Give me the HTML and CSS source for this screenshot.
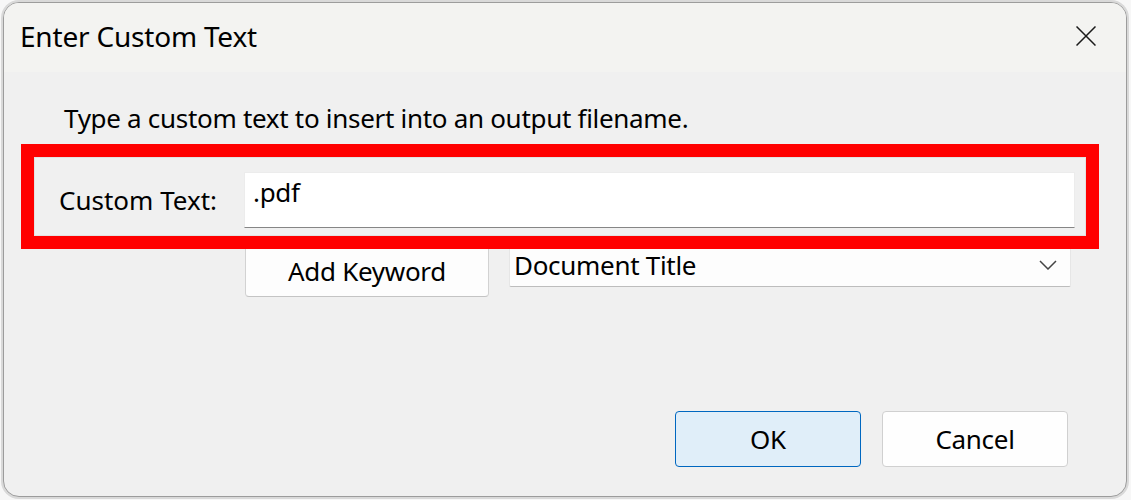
FILE: index.html
```html
<!DOCTYPE html>
<html>
<head>
<meta charset="utf-8">
<link rel="stylesheet" href="styles.css">
</head>
<body>
<div class="dialog">
  <div class="titlebar">
    <span class="title">Enter Custom Text</span>
    <svg class="close" width="20" height="20" viewBox="0 0 20 20"><path d="M0.5 0.5L19.5 19.5M19.5 0.5L0.5 19.5" stroke="#1a1a1a" stroke-width="1.5" fill="none"/></svg>
  </div>
  <div class="body">
    <p class="desc">Type a custom text to insert into an output filename.</p>
    <div class="row row-input">
      <label class="label">Custom Text:</label>
      <div class="input">.pdf</div>
    </div>
    <div class="row row-keyword">
      <button class="btn btn-keyword">Add Keyword</button>
      <div class="select">
        <span>Document Title</span>
        <svg class="chev" width="18" height="10" viewBox="0 0 18 10"><path d="M1 1L9 9L17 1" stroke="#444" stroke-width="1.5" fill="none"/></svg>
      </div>
    </div>
    <div class="highlight"></div>
  </div>
  <div class="footer">
    <button class="btn btn-ok">OK</button>
    <button class="btn btn-cancel">Cancel</button>
  </div>
</div>
</body>
</html>
```
FILE: styles.css
```css
html, body {
  margin: 0;
  padding: 0;
  background: #f7f7f7;
  width: 1131px;
  height: 500px;
  overflow: hidden;
  font-family: "Noto Sans", "Open Sans", sans-serif;
  color: #000;
}
.dialog {
  margin: 2px 0 0 3px;
  width: 1124px;
  height: 495px;
  box-sizing: border-box;
  border: 1px solid #9c9c9c;
  box-shadow: 0 0 0 2px rgba(0,0,0,0.12);
  border-radius: 16px;
  background: #f0f0f0;
  overflow: hidden;
  display: flex;
  flex-direction: column;
  position: relative;
  letter-spacing: -0.3px;
}
.titlebar {
  height: 69px;
  flex: none;
  background: #f3f3f1;
  display: flex;
  align-items: center;
  justify-content: space-between;
  padding: 0 30px 0 16px;
}
.title {
  font-size: 28px;
  letter-spacing: -0.2px;
  margin-top: -3px;
}
.close {
  display: block;
  margin-top: -3px;
}
.body {
  flex: 1;
  position: relative;
}
.desc {
  margin: 29px 0 0 60px;
  font-size: 26px;
  line-height: 34px;
}
.row {
  display: flex;
}
.row-input {
  margin-top: 37px;
  align-items: center;
}
.label {
  box-sizing: border-box;
  width: 240px;
  padding-left: 55px;
  font-size: 26px;
  letter-spacing: 0;
}
.input {
  width: 831px;
  height: 56px;
  box-sizing: border-box;
  background: #fff;
  border: 1px solid #ececec;
  border-bottom: 1px solid #868686;
  font-size: 26px;
  padding: 2px 0 0 8px;
  line-height: 34px;
}
.row-keyword {
  margin-top: 14px;
  padding-left: 241px;
  align-items: flex-start;
}
.btn {
  font-family: inherit;
  font-size: 26px;
  letter-spacing: -0.3px;
  color: #000;
  border-radius: 4px;
  box-sizing: border-box;
  padding: 0;
  margin: 0;
}
.btn-keyword {
  width: 244px;
  height: 55px;
  background: #fdfdfd;
  border: 1px solid #d2d2d2;
  border-bottom-color: #c4c4c4;
  padding-top: 2px;
}
.select {
  margin-left: 20px;
  width: 562px;
  height: 45px;
  box-sizing: border-box;
  background: #fdfdfd;
  border: 1px solid #e6e6e6;
  border-bottom: 1px solid #bdbdbd;
  border-radius: 2px;
  display: flex;
  align-items: center;
  justify-content: space-between;
  padding: 0 13px 0 4px;
  font-size: 26px;
}
.chev {
  display: block;
}
.highlight {
  position: absolute;
  left: 17px;
  top: 72px;
  width: 1078px;
  height: 105px;
  box-sizing: border-box;
  border: 13px solid #ff0000;
  box-shadow: inset 0 0 0 1px #e2e2e2;
}
.footer {
  flex: none;
  display: flex;
  justify-content: flex-end;
  gap: 21px;
  padding: 0 58px 29px 0;
}
.btn-ok, .btn-cancel {
  width: 186px;
  height: 56px;
}
.btn-ok {
  background: #e0eef9;
  border: 1px solid #0067c0;
}
.btn-cancel {
  background: #fefefe;
  border: 1px solid #d0d0d0;
}
```
